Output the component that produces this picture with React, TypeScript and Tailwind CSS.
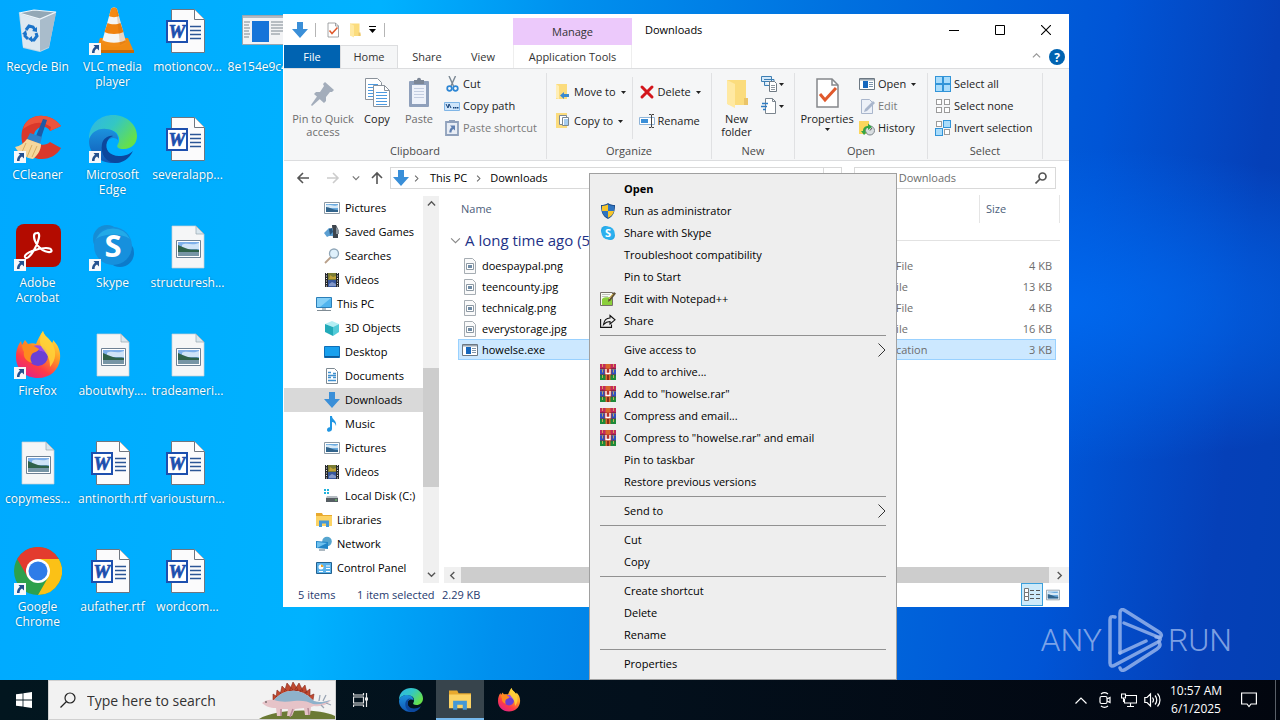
import React from "react";

type IconProps = { size?: number };

/* ---------- shared small shapes ---------- */

function Caret() {
  return (
    <svg width="5" height="3" viewBox="0 0 5 3" className="shrink-0">
      <path d="M0 0h5L2.500 3z" fill="#222" />
    </svg>
  );
}

function Chevron({ dir, size = 8, color = "#555", width = 1.5 }: { dir: "up" | "down" | "left" | "right"; size?: number; color?: string; width?: number }) {
  const paths = { up: "M1 6l4-4 4 4", down: "M1 3l4 4 4-4", left: "M7 1L3 5l4 4", right: "M3 1l4 4-4 4" };
  return (
    <svg width={size} height={size} viewBox="0 0 10 10" fill="none" className="shrink-0">
      <path d={paths[dir]} stroke={color} strokeWidth={width} />
    </svg>
  );
}

function DownArrow({ size = 16 }: IconProps) {
  return (
    <svg width={size} height={size} viewBox="0 0 16 16" className="shrink-0">
      <path d="M5 0h6v7h5l-8 9-8-9h5z" fill="#3a8fd8" />
    </svg>
  );
}

function ShortcutBadge() {
  return (
    <svg width="12" height="12" viewBox="0 0 12 12" className="absolute bottom-0 left-0">
      <path d="M0 0h12v12H0z" fill="#f6f8fb" />
      <path d="M4.500 2H10v5.500L8 5.600C6.300 6.500 5.500 8 5.600 10H3C2.800 7.500 4 5.200 6 3.800z" fill="#24518f" />
    </svg>
  );
}

/* ---------- desktop icons ---------- */

function RecycleBin() {
  return (
    <svg width="48" height="48" viewBox="0 0 48 48">
      <path d="M5 7l37-2-7 36-9 4-17-4z" fill="#c9d9e4" opacity=".95" />
      <path d="M26 12l16-6-7 34-9 4z" fill="#a9bccb" />
      <path d="M5 6l15-3 22 2-16 7z" fill="#93a8b6" stroke="#eef5fa" strokeWidth="1.200" />
      <path d="M6 7l3 33 17 4V13z" fill="#dfeaf2" opacity=".9" />
      <g fill="none" stroke="#1b73c9" strokeWidth="3">
        <path d="M12 23l3-4 4 1 2 3" />
        <path d="M22 26l1 3-3 4h-3" />
        <path d="M14 32l-3-3 0-3" />
      </g>
      <path d="M18 24l5 1 0-5zM18 29v6l-4-3zM8 27l5 1-1-5z" fill="#1b73c9" />
    </svg>
  );
}

function Vlc() {
  return (
    <svg width="48" height="48" viewBox="0 0 48 48">
      <path d="M11 31h28l6 14H7z" fill="#f08a12" />
      <path d="M7 43h38v3H7z" fill="#c96a06" />
      <path d="M22 2c1-2 5-2 6 0l9 33c-4 5-20 5-24 0z" fill="#f4f4f4" />
      <path d="M22 2c1-2 5-2 6 0l2 7c-2 1.500-8 1.500-10 0z" fill="#f58a14" />
      <path d="M18.500 16c3 1.800 10 1.800 13 0l3 9c-4 2.500-15 2.500-19 0z" fill="#f0820f" />
      <path d="M13.500 33c5 3.500 18 3.500 23 0l1 3c-4 5-21 5-25 0z" fill="#f28c18" />
      <path d="M27 0l10 35-6 3z" fill="#b85a00" opacity=".2" />
    </svg>
  );
}

function WordDoc() {
  return (
    <svg width="48" height="48" viewBox="0 0 48 48">
      <path d="M7.500 2.500h23l10 10v33h-33z" fill="#fbfbfc" stroke="#6f7680" />
      <path d="M30.500 2.500v10h10" fill="#fff" stroke="#6f7680" />
      <path d="M26 19.500h11M26 23.500h11M26 27.500h11M26 31.500h11" stroke="#2c5696" strokeWidth="1.500" />
      <path d="M3 14h20v21H3z" fill="#fff" stroke="#1d4fae" strokeWidth="2" />
      <text x="13" y="31" textAnchor="middle" fontFamily="Liberation Serif, serif" fontStyle="italic" fontWeight="bold" fontSize="19" fill="#1d4fae" stroke="#1d4fae" strokeWidth=".7">W</text>
    </svg>
  );
}

function ImageFile() {
  return (
    <svg width="48" height="48" viewBox="0 0 48 48">
      <path d="M8 3h24l8 8v34H8z" fill="#f5f6f7" stroke="#c8ced4" strokeWidth=".7" />
      <path d="M32 3v8h8z" fill="#d9e6ee" stroke="#9aa7b0" strokeWidth=".7" />
      <path d="M12.500 17.500h24v17h-24z" fill="#fff" stroke="#6e8194" />
      <path d="M14 19h21v14H14z" fill="#7fb0ea" />
      <path d="M18 22c4-3 10 1 17-2v6H18z" fill="#cfe3f7" />
      <path d="M14 22c3 1 6 3 10 4s8 0 11 1v3H14z" fill="#2f6149" />
      <path d="M14 29h21v4H14z" fill="#7795a5" />
    </svg>
  );
}

function AppShot() {
  return (
    <svg width="48" height="48" viewBox="0 0 48 48">
      <path d="M3.500 8.500h44v29h-44z" fill="#f2f3f5" stroke="#99a5b0" />
      <path d="M4 9h44v2H4z" fill="#b2bac4" />
      <path d="M13 14h17v21H13z" fill="#1674d9" />
      <path d="M5 15h6M5 18h5M5 21h6M5 24h5M5 27h6M5 30h5M32 15h12M32 18h12M32 21h12M32 24h12M32 27h9" stroke="#7d8790" />
    </svg>
  );
}

function CCleaner() {
  return (
    <svg width="48" height="48" viewBox="0 0 48 48">
      <path d="M47 11C36-4 12-3 8 16c-3 16 8 29 20 28 8 0 15-4 19-11l-11-6c-5 5-14 3-16-4-1-7 5-12 11-11 3 1 4 2 5 4z" fill="#d9382b" />
      <path d="M47 11C36-4 13-2 9 14c9-7 19-9 28-2l-1 4z" fill="#ec543c" />
      <path d="M29 4l4 1-6 18-5-2z" fill="#1d5aa6" />
      <path d="M16 18l12 4-2 7-13-5z" fill="#2f82ca" />
      <path d="M13 24l14 5c0 6-3 11-8 15C12 43 5 39 1 32c5-1 9-4 12-8z" fill="#f5d79c" />
      <path d="M12 28l-4 9M18 30l-5 12M23 31l-5 11" stroke="#d9ac61" strokeWidth="1" />
    </svg>
  );
}

function Edge({ size = 48 }: IconProps) {
  return (
    <svg width={size} height={size} viewBox="0 0 48 48">
      <defs>
        <linearGradient id="edge-top" x1="0" y1="0" x2="1" y2=".6">
          <stop offset="0" stopColor="#2fb5e8" />
          <stop offset=".5" stopColor="#33c7c4" />
          <stop offset="1" stopColor="#66e04a" />
        </linearGradient>
        <linearGradient id="edge-body" x1="0" y1="0" x2="0" y2="1">
          <stop offset="0" stopColor="#1c92dd" />
          <stop offset="1" stopColor="#1057b5" />
        </linearGradient>
      </defs>
      <path d="M0 24C0 8 12 0 24 0c14 0 24 10 24 21 0 8-6 13-13 13-6 0-8-2-6-5 3-5 0-14-9-14C10 13 3 17 0 24z" fill="url(#edge-top)" />
      <path d="M0 26c1-8 9-13 17-12 8 0 13 6 12 11-2-3-9-3-11 2-3 8 3 17 14 20-2 1-5 1-8 1C10 48 0 38 0 26z" fill="url(#edge-body)" />
      <path d="M18 27c-3 7 3 14 12 14 6 0 11-2 14-5-4 8-10 12-18 12-9-1-15-9-13-19 1-5 6-9 11-8-3 1-5 3-6 6z" fill="#0c479d" />
    </svg>
  );
}

function Acrobat() {
  return (
    <svg width="48" height="48" viewBox="0 0 48 48">
      <rect x="2" y="1" width="45" height="43" rx="8" fill="#b30b00" />
      <path d="M23 10c4-1 2 9-3 17-4 7-8 10-9 7-1-4 13-9 21-9 7 0 7 5 2 4-8-1-14-10-14-16 0-2 1-3 3-3z" fill="none" stroke="#fff" strokeWidth="2.200" />
    </svg>
  );
}

function SkypeLarge() {
  return (
    <svg width="48" height="48" viewBox="0 0 48 48">
      <circle cx="18" cy="16" r="14" fill="#168dd4" />
      <circle cx="31" cy="30" r="14" fill="#0c7bcb" />
      <circle cx="24" cy="23" r="19" fill="#1690dd" />
      <path d="M7 16a19 19 0 0 1 34 0c-8-6-26-6-34 0z" fill="#28b5ed" opacity=".7" />
      <text x="24" y="34" textAnchor="middle" fontFamily="Open Sans, sans-serif" fontWeight="bold" fontSize="31" fill="#fff">S</text>
    </svg>
  );
}

function Firefox({ size = 48 }: IconProps) {
  return (
    <svg width={size} height={size} viewBox="0 0 48 48">
      <defs>
        <linearGradient id="ff-body" x1=".85" y1="0" x2=".25" y2="1">
          <stop offset="0" stopColor="#fff04a" />
          <stop offset=".4" stopColor="#ff9a24" />
          <stop offset=".72" stopColor="#ff3b47" />
          <stop offset="1" stopColor="#e0218a" />
        </linearGradient>
      </defs>
      <path d="M29 0c1 5 6 7 9 12 1-1 1-2 1-3 5 5 8 11 7 19-1 11-10 19-22 19C11 47 2 38 2 26c0-7 2-12 5-16l1 4 3-5 3 4c3-1 6-1 8 0 2-5 4-9 7-13z" fill="url(#ff-body)" />
      <circle cx="24" cy="25" r="10" fill="#6b3fd4" />
      <path d="M19 15c8-3 16 3 15 11-1-4-4-6-8-6z" fill="#9b4be6" />
      <path d="M8 14c4-2 9-1 12 1l5 3c-1 3-5 3-7 5-2 3-2 6 0 9-6-2-9-6-8-11-1-2-2-4-2-7z" fill="#ff8a1e" />
      <path d="M29 0c1 5 6 7 9 12 5 8 4 17-2 24 0-9-3-13-7-18-4-4-4-12 0-18z" fill="#ffd43a" opacity=".85" />
    </svg>
  );
}

function Chrome() {
  return (
    <svg width="48" height="48" viewBox="0 0 48 48">
      <circle cx="24" cy="24" r="24" fill="#2da04c" />
      <path d="M13.600 30L3.200 12A24 24 0 0 1 44.800 12H24z" fill="#e33b2e" />
      <path d="M24 12h20.800A24 24 0 0 1 24 48l10.400-18z" fill="#fbc116" />
      <circle cx="24" cy="24" r="12" fill="#fff" />
      <circle cx="24" cy="24" r="9.500" fill="#2f7ce8" />
    </svg>
  );
}

type DesktopEntry = { label: string; icon: React.ReactNode; shortcut?: boolean };

const desktopEntries: DesktopEntry[] = [
  { label: "Recycle Bin", icon: <RecycleBin /> },
  { label: "CCleaner", icon: <CCleaner />, shortcut: true },
  { label: "Adobe Acrobat", icon: <Acrobat />, shortcut: true },
  { label: "Firefox", icon: <Firefox />, shortcut: true },
  { label: "copymess...", icon: <ImageFile /> },
  { label: "Google Chrome", icon: <Chrome />, shortcut: true },
  { label: "VLC media player", icon: <Vlc />, shortcut: true },
  { label: "Microsoft Edge", icon: <Edge />, shortcut: true },
  { label: "Skype", icon: <SkypeLarge />, shortcut: true },
  { label: "aboutwhy....", icon: <ImageFile /> },
  { label: "antinorth.rtf", icon: <WordDoc /> },
  { label: "aufather.rtf", icon: <WordDoc /> },
  { label: "motioncov...", icon: <WordDoc /> },
  { label: "severalapp...", icon: <WordDoc /> },
  { label: "structuresh...", icon: <ImageFile /> },
  { label: "tradeameri...", icon: <ImageFile /> },
  { label: "variousturn...", icon: <WordDoc /> },
  { label: "wordcom...", icon: <WordDoc /> },
  { label: "8e154e9c4...", icon: <AppShot /> },
];

function DesktopIcon({ label, icon, shortcut }: DesktopEntry) {
  return (
    <button className="flex flex-col items-center gap-1 text-white">
      <span className="relative block">
        {icon}
        {shortcut && <ShortcutBadge />}
      </span>
      <span className="px-0.5 text-center text-[12px] leading-[15px] [text-shadow:0_0_2px_#00000066]">{label}</span>
    </button>
  );
}

/* ---------- 16px icons ---------- */

function PropertiesIcon({ size = 16 }: IconProps) {
  return (
    <svg width={size} height={size} viewBox="0 0 32 32" className="shrink-0">
      <path d="M6 2h15l6 6v22H6z" fill="#fff" stroke="#85888c" strokeWidth="1.500" />
      <path d="M21 2v6h6" fill="none" stroke="#85888c" strokeWidth="1.500" />
      <path d="M9 17l5 6 11-12" fill="none" stroke="#e0592c" strokeWidth="3" />
    </svg>
  );
}

function FolderIcon({ size = 16 }: IconProps) {
  return (
    <svg width={size} height={size} viewBox="0 0 32 32" className="shrink-0">
      <path d="M6 3h19v20l2 1v4H8l-2-2z" fill="#fbdc7d" />
      <path d="M6 3l8 4v24l-8-4z" fill="#ffe9a2" />
      <path d="M23 21h4v7h-4z" fill="#eac469" />
    </svg>
  );
}

function PinIcon() {
  return (
    <svg width="32" height="32" viewBox="0 0 32 32">
      <path d="M18 5l9 8-2 2-2 0-4 5 0 4-2 2-10-9 2-2 4 0 4-6-1-2z" fill="#a3adbb" />
      <path d="M11 18l3 3-9 8-1-1z" fill="#a3adbb" />
    </svg>
  );
}

function CopyIcon() {
  return (
    <svg width="32" height="32" viewBox="0 0 32 32">
      <path d="M4.500 1.500h12l4 4v17h-16z" fill="#fff" stroke="#8a929b" />
      <path d="M7 7.500h10M7 10.500h10M7 13.500h10M7 16.500h10M7 19.500h10" stroke="#4c9ae0" />
      <path d="M12.500 8.500h11l5 5v16h-16z" fill="#fff" stroke="#8a929b" />
      <path d="M23.500 8.500v5h5" fill="none" stroke="#8a929b" />
      <path d="M15 15.500h11M15 18.500h11M15 21.500h11M15 24.500h11M15 27.500h11" stroke="#4c9ae0" />
    </svg>
  );
}

function PasteIcon() {
  return (
    <svg width="32" height="32" viewBox="0 0 32 32">
      <rect x="6" y="4" width="20" height="26" rx="1" fill="#8fa0bb" />
      <path d="M9 8h14v19H9z" fill="#eef2fa" />
      <path d="M11 11.500h10M11 14.500h10M11 17.500h10M11 20.500h10" stroke="#c3cde0" />
      <path d="M11 3h3c0-3 4-3 4 0h3v4H11z" fill="#7c8797" />
    </svg>
  );
}

function CutIcon() {
  return (
    <svg width="16" height="16" viewBox="0 0 16 16" fill="none" className="shrink-0">
      <path d="M5 0l4.500 10M11.500 0L7 10" stroke="#7a8793" strokeWidth="1.400" />
      <circle cx="5.500" cy="12.500" r="2.300" stroke="#2d86d4" strokeWidth="1.700" />
      <circle cx="11.500" cy="12.500" r="2.300" stroke="#2d86d4" strokeWidth="1.700" />
    </svg>
  );
}

function CopyPathIcon() {
  return (
    <svg width="16" height="16" viewBox="0 0 16 16" className="shrink-0">
      <path d="M.5 4.500h15v8H.5z" fill="#cfe5fa" stroke="#7fb5e6" />
      <path d="M2 6l2 4 1-4 2 4" fill="none" stroke="#123f77" />
      <path d="M9 9h1.500v1.500H9zM11 9h1.500v1.500H11zM13 9h1.500v1.500H13z" fill="#123f77" />
    </svg>
  );
}

function PasteShortcutIcon() {
  return (
    <svg width="16" height="16" viewBox="0 0 16 16" className="shrink-0">
      <path d="M2 2h12v13H2z" fill="#e8edf5" stroke="#8fa0bb" strokeWidth="1.800" />
      <path d="M5 0h6v3H5z" fill="#8fa0bb" />
      <path d="M6 5.500h5v5L9.300 9C8 9.800 7.500 11 7.500 12.500H5.300C5.300 10.500 6 8.600 7.700 7.300z" fill="#5f7fb0" />
    </svg>
  );
}

function MoveToIcon() {
  return (
    <svg width="16" height="16" viewBox="0 0 16 16" className="shrink-0">
      <path d="M1 0h11v15H1z" fill="#fbdc7d" />
      <path d="M1 0l3 2v13l-3-1z" fill="#ffeeb5" />
      <path d="M14 10v3H9v2l-4-3.500L9 8v2z" fill="#3b8ad0" />
    </svg>
  );
}

function CopyToIcon() {
  return (
    <svg width="16" height="16" viewBox="0 0 16 16" className="shrink-0">
      <path d="M1 0h11v15H1z" fill="#fbdc7d" />
      <path d="M4.500 2.500h7v9h-7z" fill="#fff" stroke="#7b8894" />
      <path d="M7.500 4.500h6v8h-6z" fill="#fff" stroke="#7b8894" />
      <path d="M9 7h4M9 9h4M9 11h4" stroke="#4c9ae0" />
    </svg>
  );
}

function DeleteIcon() {
  return (
    <svg width="16" height="16" viewBox="0 0 16 16" className="shrink-0">
      <path d="M3 3l10 10M13 3L3 13" stroke="#d3161c" strokeWidth="3" strokeLinecap="round" />
    </svg>
  );
}

function RenameIcon() {
  return (
    <svg width="16" height="16" viewBox="0 0 16 16" fill="none" className="shrink-0">
      <path d="M.5 4.500h15v7H.5z" fill="#fff" stroke="#8fb4d8" />
      <path d="M2 6h7v4H2z" fill="#3a8fd8" />
      <path d="M10 1.500h2l.5.500.5-.500h2M12.500 2v12M10 14.500h2l.5-.500.5.500h2" stroke="#444" />
    </svg>
  );
}

function NewItemIcon() {
  return (
    <svg width="16" height="16" viewBox="0 0 16 16" className="shrink-0">
      <path d="M.5.500h10v5H.5zM3.500 5.500v4h5M3 3.500h10v4" fill="#d5e9fa" stroke="#3e7fb3" />
      <path d="M8.500 5.500h5l2 2v8h-7z" fill="#fff" stroke="#6f7a84" />
      <path d="M10 9.500h4M10 11.500h4M10 13.500h4" stroke="#8d979f" />
    </svg>
  );
}

function EasyAccessIcon() {
  return (
    <svg width="16" height="16" viewBox="0 0 16 16" className="shrink-0">
      <path d="M4.500.500h7l3 3v12h-10z" fill="#fff" stroke="#7b858e" />
      <path d="M11.500.500v3h3" fill="none" stroke="#7b858e" />
      <path d="M1 5.500h6M0 8.500h6M2 11.500h3" stroke="#2f7cc4" strokeWidth="1.500" />
    </svg>
  );
}

function ExeIcon() {
  return (
    <svg width="16" height="16" viewBox="0 0 16 16" className="shrink-0">
      <path d="M.5 2.500h15v11H.5z" fill="#fff" stroke="#6c7883" />
      <path d="M1 3h14v1.500H1z" fill="#9ba6b0" />
      <path d="M4 5h5v7H4z" fill="#1667bd" />
      <path d="M10 6.500h4M10 8.500h4M10 10.500h4" stroke="#7e95ac" />
    </svg>
  );
}

function EditIcon() {
  return (
    <svg width="16" height="16" viewBox="0 0 16 16" className="shrink-0">
      <path d="M2.500 1.500h8l3 3v11h-11z" fill="#edf1f8" stroke="#a9b6cc" />
      <path d="M5 14l1-3 8-8 2 2-8 8z" fill="#a9b6cc" />
    </svg>
  );
}

function HistoryIcon() {
  return (
    <svg width="16" height="16" viewBox="0 0 16 16" className="shrink-0">
      <path d="M0 1h10v13H0z" fill="#fbd65c" />
      <circle cx="11" cy="10.500" r="4.500" fill="#d8dde0" stroke="#7d868c" />
      <path d="M11 10.500l2-2.500" stroke="#555" />
      <path d="M4 11c0-4 3-5 5-5V3.500l4 3.500-4 3V8c-2 0-3 1-2.500 4.500L8 12l-3 3-3-4z" fill="#36a544" />
    </svg>
  );
}

function SelectIcon({ filled }: { filled: boolean[] }) {
  const spots = [[1, 1], [9, 1], [1, 9], [9, 9]];
  return (
    <svg width="16" height="16" viewBox="0 0 16 16" className="shrink-0">
      {spots.map(([x, y], i) =>
        filled[i] ? (
          <rect key={i} x={x - 0.5} y={y - 0.5} width="7" height="7" fill="#a9dcfb" stroke="#3194d8" />
        ) : (
          <rect key={i} x={x + 0.5} y={y + 0.5} width="5" height="5" fill="#fff" stroke="#9b9b9b" />
        ),
      )}
    </svg>
  );
}

function PictureIcon({ size = 16 }: IconProps) {
  return (
    <svg width={size} height={size} viewBox="0 0 16 16" className="shrink-0">
      <path d="M.5 2.500h15v11H.5z" fill="#fff" stroke="#8c9aa6" />
      <path d="M2 4h12v8H2z" fill="#6cabdf" />
      <path d="M2 5c5-1 8 2 12 0v3H2z" fill="#d6e9f7" />
      <path d="M2 7c4 0 6 3 12 3v2H2z" fill="#31648c" />
    </svg>
  );
}

function GamesIcon() {
  return (
    <svg width="16" height="16" viewBox="0 0 16 16" className="shrink-0">
      <path d="M8 1h4l2 4v9H9z" fill="#3d454d" />
      <path d="M0 9l5-5 4 1v7H5l-2 1z" fill="#5b9fd2" />
      <path d="M5 5l3-1 1 4-3 3z" fill="#2b567c" />
      <path d="M12 3l3 3v4h-3z" fill="#8a939b" />
    </svg>
  );
}

function SearchesIcon() {
  return (
    <svg width="16" height="16" viewBox="0 0 16 16" className="shrink-0">
      <path d="M7 9l-6 6" stroke="#b9a08a" strokeWidth="1.800" />
      <circle cx="10" cy="5.500" r="4.500" fill="#dff0fb" stroke="#8fa6b8" strokeWidth="1.300" />
    </svg>
  );
}

function VideosIcon() {
  return (
    <svg width="16" height="16" viewBox="0 0 16 16" className="shrink-0">
      <path d="M1 1h14v14H1z" fill="#26282c" />
      <path d="M4 1h8v7H4z" fill="#7b7d34" />
      <path d="M4 8h8v7H4z" fill="#37579c" />
      <path d="M6 3l3 2 3-1v3H5z" fill="#c1a236" />
      <path d="M5 12l3-2 4 2v2H5z" fill="#8297c8" />
      <path d="M2.500 1v14M13.500 1v14" stroke="#e9e9e9" strokeDasharray="1 1.500" />
    </svg>
  );
}

function PcIcon() {
  return (
    <svg width="16" height="16" viewBox="0 0 16 16" className="shrink-0">
      <path d="M.5 1.500h15v10H.5z" fill="#51b4ee" stroke="#2b7eb8" />
      <path d="M1 2h14L4 11H1z" fill="#86d0f7" />
      <path d="M1 14.500h14" stroke="#7f8b94" />
      <path d="M6 12h4v2H6z" fill="#b8c2c9" />
    </svg>
  );
}

function ObjectsIcon() {
  return (
    <svg width="16" height="16" viewBox="0 0 16 16" className="shrink-0">
      <path d="M1 4l7-3 7 3-6 3z" fill="#b4eef4" />
      <path d="M1 4l8 3v9l-8-4z" fill="#22aab9" />
      <path d="M9 7l6-3v8l-6 4z" fill="#52cbd8" />
    </svg>
  );
}

function DesktopSmallIcon() {
  return (
    <svg width="16" height="16" viewBox="0 0 16 16" className="shrink-0">
      <path d="M.5 2.500h15v11H.5z" fill="#18a0ee" stroke="#0f6fb8" />
      <path d="M1 12h14v1.500H1z" fill="#0c5a99" />
    </svg>
  );
}

function DocumentsIcon() {
  return (
    <svg width="16" height="16" viewBox="0 0 16 16" className="shrink-0">
      <path d="M2.500.500h8l3 3v12h-11z" fill="#fff" stroke="#7e8a93" />
      <path d="M4 4.500h3M9 5.500h3M4 7.500h8M4 9.500h3M9 9.500h3M4 12.500h8" stroke="#3f8fce" strokeWidth="1.300" />
    </svg>
  );
}

function MusicIcon() {
  return (
    <svg width="16" height="16" viewBox="0 0 16 16" className="shrink-0">
      <path d="M6 0h2c0 4 5 4 4 10-1-3-2-4-4-4v7c0 3-5 4-5 1 0-2 2-3 3-2.500z" fill="#1f96e3" />
    </svg>
  );
}

function DiskIcon() {
  return (
    <svg width="16" height="16" viewBox="0 0 16 16" className="shrink-0">
      <path d="M0 1h2v2H0zM3 1h2v2H3zM0 4h2v2H0zM3 4h2v2H3z" fill="#1fb2dc" />
      <path d="M3 8h10l1 2H2z" fill="#b5bcc2" />
      <path d="M2 10h12v4H2z" fill="#565e64" />
      <path d="M11 12h2" stroke="#6fe06a" />
    </svg>
  );
}

function LibrariesIcon({ size = 16 }: IconProps) {
  return (
    <svg width={size} height={size} viewBox="0 0 16 16" className="shrink-0">
      <path d="M0 1h6l1 2h9v3H0z" fill="#e8a92e" />
      <path d="M0 4h16v10H0z" fill="#fcd364" />
      <path d="M3 15V8.500h10V15h-3v-3.500H6V15z" fill="#4598d6" />
    </svg>
  );
}

function NetworkIcon() {
  return (
    <svg width="16" height="16" viewBox="0 0 16 16" className="shrink-0">
      <circle cx="11" cy="5.500" r="4.800" fill="#56a5cf" />
      <path d="M0 5l12 1v7l-12-1z" fill="#2185c7" />
      <path d="M1 6l10 1-10 5z" fill="#6fc1ee" />
      <path d="M3 14h6" stroke="#5a7283" />
    </svg>
  );
}

function ControlPanelIcon() {
  return (
    <svg width="16" height="16" viewBox="0 0 16 16" className="shrink-0">
      <path d="M.5 2.500h15v11H.5z" fill="#5ab1ea" stroke="#22618f" />
      <circle cx="5" cy="7" r="2.500" fill="#fff" />
      <path d="M5 7V4.500A2.500 2.500 0 0 1 7.500 7z" fill="#f5a623" />
      <path d="M10 6h4M10 8.500h4M3 11.500h4M10 11.500h4" stroke="#fff" />
    </svg>
  );
}

function FileThumb() {
  return (
    <svg width="16" height="16" viewBox="0 0 16 16" className="shrink-0">
      <path d="M2.500.500h8l3 3v12h-11z" fill="#fafafa" stroke="#a6adb3" />
      <path d="M4.500 5.500h7v6h-7z" fill="#fff" stroke="#8d99a3" />
      <path d="M6 7h4v3H6z" fill="#6f8ba5" />
    </svg>
  );
}

function ShieldIcon() {
  return (
    <svg width="16" height="16" viewBox="0 0 16 16">
      <path d="M8 0c2 1.500 4.500 2 7 2 0 6-1 11-7 14C2 13 1 8 1 2c2.500 0 5-.5 7-2z" fill="#1c4d8c" />
      <path d="M8 1.500V8H2C1.900 6 2 4.500 2 3c2.300-.1 4.300-.6 6-1.500zM8 8h6c-.6 3-2.500 5.300-6 6.800z" fill="#f7c52b" />
      <path d="M8 1.500C9.700 2.400 11.700 2.900 14 3c0 1.500.1 3 0 5H8zM8 8v6.800C4.500 13.300 2.600 11 2 8z" fill="#2f74c0" />
    </svg>
  );
}

function SkypeSmall() {
  return (
    <svg width="16" height="16" viewBox="0 0 16 16">
      <circle cx="5.500" cy="5.500" r="4.500" fill="#22a7e8" />
      <circle cx="10.500" cy="10.500" r="4.500" fill="#22a7e8" />
      <circle cx="8" cy="8" r="6.500" fill="#2bb0ee" />
      <text x="8" y="12" textAnchor="middle" fontFamily="Open Sans, sans-serif" fontWeight="bold" fontSize="11" fill="#fff">S</text>
    </svg>
  );
}

function NotepadIcon() {
  return (
    <svg width="16" height="16" viewBox="0 0 16 16">
      <path d="M.5 1.500h12v13H.5z" fill="#f8faf4" stroke="#77706a" />
      <path d="M2 8c3-3 7-1 10-2v8H2z" fill="#8bcf3b" />
      <path d="M2 3.500h8M2 5.500h6" stroke="#c0c4bb" />
      <path d="M8 11l.5-3L14 1l2 1.500-5.500 7z" fill="#5e5035" />
      <path d="M9 8l4-5" stroke="#e8c75a" />
    </svg>
  );
}

function ShareIcon() {
  return (
    <svg width="16" height="16" viewBox="0 0 16 16" fill="none" stroke="#111" strokeWidth="1.100">
      <path d="M.6 6v8.400h10.900V11.500" />
      <path d="M10 2.500l5 4.300-5 4.200V8.500c-3 0-4.600 1-6.500 3C4 8 6 5 10 5z" />
    </svg>
  );
}

function RarIcon() {
  return (
    <svg width="16" height="16" viewBox="0 0 16 16">
      <path d="M0 0h16v5H0z" fill="#c22a5c" />
      <path d="M0 5.500h16v5H0z" fill="#2f4fbf" />
      <path d="M0 11h16v5H0z" fill="#1d8a3a" />
      <path d="M0 5h16M0 10.700h16" stroke="#331a2a" strokeWidth=".8" />
      <path d="M2.500 0v16M13.500 0v16" stroke="#e2bd54" strokeWidth=".8" strokeDasharray="3 2.500" />
      <path d="M5.500 0h5v16h-5z" fill="#d9692b" />
      <path d="M7 11h2v5H7z" fill="#8a2d1a" />
      <path d="M4.500 4.500h7v6h-7z" fill="#b8302a" />
      <path d="M6 5v4.500h4V5" fill="none" stroke="#fff" strokeWidth="1.400" />
    </svg>
  );
}

/* ---------- ribbon ---------- */

function BigButton({ icon, label, caret, muted, width }: { icon: React.ReactNode; label: string; caret?: boolean; muted?: boolean; width: string }) {
  return (
    <button className={`flex flex-col items-center gap-[3px] pt-1 leading-[13px] ${width} ${muted ? "text-[#6d6d6d]" : "text-[#222]"}`}>
      {icon}
      <span>{label}</span>
      {caret && <Caret />}
    </button>
  );
}

function SmallButton({ icon, label, caret, muted }: { icon: React.ReactNode; label: string; caret?: boolean; muted?: boolean }) {
  return (
    <button className={`flex h-[22px] items-center gap-[3px] whitespace-nowrap ${muted ? "text-[#7a7a7a]" : "text-[#222]"}`}>
      {icon}
      <span>{label}</span>
      {caret && <span className="pl-0.5"><Caret /></span>}
    </button>
  );
}

function RibbonGroup({ title, width, children }: { title: string; width: string; children: React.ReactNode }) {
  return (
    <section className={`mt-1 mb-px flex shrink-0 flex-col border-r border-[#e0e1e3] ${width}`}>
      <div className="flex flex-1">{children}</div>
      <h2 className="text-center leading-4 text-[#4a4a4a]">{title}</h2>
    </section>
  );
}

function Ribbon() {
  return (
    <div className="flex h-[93px] border-y border-[#dcdddf] bg-[#f5f6f7]">
      <RibbonGroup title="Clipboard" width="w-[263px]">
        <div className="flex pl-1">
          <BigButton icon={<PinIcon />} label="Pin to Quick access" muted width="w-[70px]" />
          <BigButton icon={<CopyIcon />} label="Copy" width="w-[38px]" />
          <BigButton icon={<PasteIcon />} label="Paste" muted width="w-[46px]" />
        </div>
        <div className="flex flex-col pl-0.5">
          <SmallButton icon={<CutIcon />} label="Cut" />
          <SmallButton icon={<CopyPathIcon />} label="Copy path" />
          <SmallButton icon={<PasteShortcutIcon />} label="Paste shortcut" muted />
        </div>
      </RibbonGroup>
      <RibbonGroup title="Organize" width="w-[165px]">
        <div className="my-1 flex flex-col gap-[7px] border-r border-[#e0e1e3] pt-1 pr-1.5 pl-2">
          <SmallButton icon={<MoveToIcon />} label="Move to" caret />
          <SmallButton icon={<CopyToIcon />} label="Copy to" caret />
        </div>
        <div className="flex flex-col gap-[7px] pt-2 pl-1.5">
          <SmallButton icon={<DeleteIcon />} label="Delete" caret />
          <SmallButton icon={<RenameIcon />} label="Rename" />
        </div>
      </RibbonGroup>
      <RibbonGroup title="New" width="w-[83px]">
        <BigButton icon={<FolderIcon size={32} />} label="New folder" width="w-[49px]" />
        <div className="flex flex-col">
          <button aria-label="New item" className="flex h-[22px] items-center gap-0.5"><NewItemIcon /><Caret /></button>
          <button aria-label="Easy access" className="flex h-[22px] items-center gap-0.5"><EasyAccessIcon /><Caret /></button>
        </div>
      </RibbonGroup>
      <RibbonGroup title="Open" width="w-[133px]">
        <BigButton icon={<PropertiesIcon size={32} />} label="Properties" caret width="w-16" />
        <div className="flex flex-col">
          <SmallButton icon={<ExeIcon />} label="Open" caret />
          <SmallButton icon={<EditIcon />} label="Edit" muted />
          <SmallButton icon={<HistoryIcon />} label="History" />
        </div>
      </RibbonGroup>
      <RibbonGroup title="Select" width="w-[115px]">
        <div className="flex flex-col pl-[7px]">
          <SmallButton icon={<SelectIcon filled={[true, true, true, true]} />} label="Select all" />
          <SmallButton icon={<SelectIcon filled={[false, false, false, false]} />} label="Select none" />
          <SmallButton icon={<SelectIcon filled={[false, true, true, false]} />} label="Invert selection" />
        </div>
      </RibbonGroup>
    </div>
  );
}

/* ---------- explorer window ---------- */

function TitleBar() {
  return (
    <header className="flex h-[31px] items-stretch">
      <div className="flex w-[229px] items-center pl-2">
        <DownArrow />
        <span className="mx-[7px] h-3.5 w-px bg-[#b5b5b5]" />
        <button aria-label="Properties" className="ml-0.5 flex"><PropertiesIcon /></button>
        <button aria-label="New folder" className="ml-1.5 flex"><FolderIcon /></button>
        <button aria-label="Customize toolbar" className="ml-0.5 flex flex-col items-center gap-0.5 px-1">
          <span className="h-px w-[7px] bg-black" />
          <svg width="7" height="4" viewBox="0 0 7 4"><path d="M0 0h7L3.500 4z" /></svg>
        </button>
        <span className="ml-1 h-3.5 w-px bg-[#b5b5b5]" />
      </div>
      <div className="mt-1 flex w-[119px] items-center justify-center bg-[#ecc9fb] pt-0.5 text-[#333]">Manage</div>
      <h1 className="flex flex-1 items-center pt-px pl-[13px] text-black">Downloads</h1>
      <button aria-label="Minimize" className="flex w-[46px] items-center justify-center">
        <svg width="10" height="10" viewBox="0 0 10 10"><path d="M0 5.500h10" stroke="#000" /></svg>
      </button>
      <button aria-label="Maximize" className="flex w-[46px] items-center justify-center">
        <svg width="10" height="10" viewBox="0 0 10 10"><path d="M.5.500h9v9h-9z" fill="none" stroke="#000" /></svg>
      </button>
      <button aria-label="Close" className="flex w-[46px] items-center justify-center">
        <svg width="10" height="10" viewBox="0 0 10 10"><path d="M0 0l10 10M10 0L0 10" stroke="#000" strokeWidth="1.100" /></svg>
      </button>
    </header>
  );
}

function RibbonTabs() {
  return (
    <nav className="flex h-[23px] items-stretch text-[#333]">
      <div className="flex w-[229px]">
        <button className="w-14 bg-[#0063b1] pt-px text-white">File</button>
        <button className="-mb-px w-[58px] border-x border-t border-[#dcdddf] bg-[#f5f6f7]">Home</button>
        <button className="w-[58px] pt-px">Share</button>
        <button className="w-[54px] pt-px">View</button>
      </div>
      <button className="w-[119px] border-x border-[#eee] pt-px whitespace-nowrap">Application Tools</button>
      <div className="flex flex-1 items-center justify-end gap-2 pr-1">
        <button aria-label="Collapse ribbon" className="flex"><Chevron dir="up" size={9} color="#999" width={1.4} /></button>
        <button aria-label="Help" className="flex">
          <svg width="16" height="16" viewBox="0 0 16 16">
            <circle cx="8" cy="8" r="8" fill="#0063b1" />
            <text x="8" y="12.500" textAnchor="middle" fontFamily="Open Sans, sans-serif" fontWeight="bold" fontSize="12" fill="#fff">?</text>
          </svg>
        </button>
      </div>
    </nav>
  );
}

function ArrowIcon({ dir, color }: { dir: "left" | "right" | "up"; color: string }) {
  const d = { left: "M13 7H2M7 2L2 7l5 5", right: "M1 7h11M7 2l5 5-5 5", up: "M7 13V2M2 7l5-5 5 5" };
  return (
    <svg width="14" height="14" viewBox="0 0 14 14" fill="none">
      <path d={d[dir]} stroke={color} strokeWidth="1.600" />
    </svg>
  );
}

function AddressRow() {
  return (
    <div className="flex h-[34px] items-center pr-[13px]">
      <div className="flex w-[106px] shrink-0 items-center pl-3">
        <button aria-label="Back" className="flex w-[30px]"><ArrowIcon dir="left" color="#555" /></button>
        <button aria-label="Forward" className="flex w-[26px]"><ArrowIcon dir="right" color="#ccc" /></button>
        <button aria-label="Recent locations" className="flex w-[18px]"><Chevron dir="down" size={8} color="#777" /></button>
        <button aria-label="Up" className="flex"><ArrowIcon dir="up" color="#555" /></button>
      </div>
      <div className="flex h-[22px] flex-1 items-center border border-[#d9d9d9] text-black">
        <span className="pl-0.5"><DownArrow /></span>
        <span className="pr-2.5 pl-1"><Chevron dir="right" size={7} color="#666" /></span>
        <a href="#this-pc">This PC</a>
        <span className="px-2"><Chevron dir="right" size={7} color="#666" /></span>
        <a href="#downloads">Downloads</a>
        <button aria-label="Previous locations" className="ml-auto flex h-full w-[18px] items-center justify-center border-l border-[#d9d9d9]">
          <Chevron dir="down" size={7} />
        </button>
      </div>
      <label className="ml-3 flex h-[22px] w-[202px] shrink-0 items-center border border-[#d9d9d9] pr-2 pl-1.5">
        <input type="search" aria-label="Search Downloads" placeholder="Search Downloads" className="w-full min-w-0 outline-none placeholder:text-[#6d6d6d]" />
        <svg width="12" height="12" viewBox="0 0 12 12" fill="none" stroke="#555" strokeWidth="1.700" className="shrink-0">
          <circle cx="7.500" cy="4.500" r="3.500" />
          <path d="M5 7l-4.500 4.500" />
        </svg>
      </label>
    </div>
  );
}

type NavItem = { label: string; icon: React.ReactNode; top?: boolean; active?: boolean };

const navItems: NavItem[] = [
  { label: "Pictures", icon: <PictureIcon /> },
  { label: "Saved Games", icon: <GamesIcon /> },
  { label: "Searches", icon: <SearchesIcon /> },
  { label: "Videos", icon: <VideosIcon /> },
  { label: "This PC", icon: <PcIcon />, top: true },
  { label: "3D Objects", icon: <ObjectsIcon /> },
  { label: "Desktop", icon: <DesktopSmallIcon /> },
  { label: "Documents", icon: <DocumentsIcon /> },
  { label: "Downloads", icon: <DownArrow />, active: true },
  { label: "Music", icon: <MusicIcon /> },
  { label: "Pictures", icon: <PictureIcon /> },
  { label: "Videos", icon: <VideosIcon /> },
  { label: "Local Disk (C:)", icon: <DiskIcon /> },
  { label: "Libraries", icon: <LibrariesIcon />, top: true },
  { label: "Network", icon: <NetworkIcon />, top: true },
  { label: "Control Panel", icon: <ControlPanelIcon />, top: true },
];

function NavPane() {
  return (
    <div className="flex w-[155px] shrink-0 pt-px">
      <ul className="flex-1">
        {navItems.map((item, i) => (
          <li key={i}>
            <a
              href="#folder"
              className={`flex h-6 items-center gap-[5px] whitespace-nowrap text-black ${item.top ? "pl-8" : "pl-10"} ${item.active ? "bg-[#d9d9d9]" : ""}`}
            >
              {item.icon}
              {item.label}
            </a>
          </li>
        ))}
      </ul>
      <div className="flex w-4 flex-col items-center bg-[#f0f0f0]">
        <button aria-label="Scroll up" className="flex h-[17px] items-center"><Chevron dir="up" size={9} /></button>
        <div className="flex w-full flex-1 flex-col">
          <div className="flex-[155]" />
          <div className="flex-[119] bg-[#cdcdcd]" />
          <div className="flex-[79]" />
        </div>
        <button aria-label="Scroll down" className="flex h-[17px] items-center"><Chevron dir="down" size={9} /></button>
      </div>
    </div>
  );
}

const files = [
  { name: "doespaypal.png", type: "PNG File", size: "4 KB" },
  { name: "teencounty.jpg", type: "JPG File", size: "13 KB" },
  { name: "technicalg.png", type: "PNG File", size: "4 KB" },
  { name: "everystorage.jpg", type: "JPG File", size: "16 KB" },
  { name: "howelse.exe", type: "Application", size: "3 KB", selected: true },
];

function FilePane() {
  return (
    <div className="flex min-w-0 flex-1 flex-col">
      <div className="flex-1 pr-[9px] pl-[19px]">
        <table className="w-full table-fixed border-separate border-spacing-0 text-left leading-4">
          <colgroup>
            <col />
            <col className="w-[115px]" />
            <col className="w-[77px]" />
            <col className="w-1" />
          </colgroup>
          <thead>
            <tr className="h-7 text-[#4c607a]">
              <th className="p-0 pl-[3px] font-normal">Name</th>
              <th className="border-l border-[#e5e5e5] p-0 pl-1.5 font-normal">Type</th>
              <th className="border-l border-[#e5e5e5] p-0 pl-1.5 font-normal">Size</th>
              <th className="p-0"><span className="ml-[3px] block h-7 w-px bg-[#e5e5e5]" /></th>
            </tr>
          </thead>
          <tbody>
            <tr className="h-8">
              <th colSpan={4} className="p-0 font-normal">
                <span className="-ml-2 flex items-center gap-1 pt-0.5 text-[15px] text-[#1e3287]">
                  <Chevron dir="down" size={11} color="#888" width={1} />
                  A long time ago (5)
                  <span className="ml-1 h-px flex-1 bg-[#e2e2e2]" />
                </span>
              </th>
            </tr>
            {files.map((f) => {
              const cell = f.selected ? "border-y border-[#99d1ff] bg-[#cce8ff]" : "";
              return (
                <tr key={f.name} className="h-[21px] text-[#6d6d6d]">
                  <td className={`py-0 pr-0 text-black ${cell} ${f.selected ? "border-l pl-[3px]" : "pl-1"}`}>
                    <span className="flex items-center gap-1">
                      {f.selected ? <ExeIcon /> : <FileThumb />}
                      {f.name}
                    </span>
                  </td>
                  <td className={`py-0 pr-0 pl-1.5 ${cell}`}>{f.type}</td>
                  <td className={`py-0 pl-0 text-right ${cell} ${f.selected ? "border-r pr-[3px]" : "pr-1"}`}>{f.size}</td>
                  <td className="p-0" />
                </tr>
              );
            })}
          </tbody>
        </table>
      </div>
      <div className="ml-[5px] flex h-4 items-center bg-[#f0f0f0]">
        <button aria-label="Scroll left" className="flex w-[17px] justify-center"><Chevron dir="left" size={9} /></button>
        <div className="h-full flex-1 bg-[#cdcdcd]" />
        <button aria-label="Scroll right" className="flex w-5 justify-center"><Chevron dir="right" size={9} /></button>
      </div>
    </div>
  );
}

function StatusBar() {
  return (
    <footer className="flex h-6 items-center pl-3.5 text-[#26396e]">
      <span className="w-[59px]">5 items</span>
      <span className="w-[85px] whitespace-nowrap">1 item selected</span>
      <span>2.29 KB</span>
      <button aria-label="Details view" className="mb-px ml-auto flex h-[23px] w-[22px] items-center justify-center border border-[#3aa0dc] bg-[#cdeafa]">
        <svg width="16" height="14" viewBox="0 0 16 14" fill="none">
          <path d="M.5.500h4v4h-4zM.5 4.500h4v4h-4zM.5 8.500h4v4h-4z" stroke="#777" fill="#fff" />
          <path d="M6 2.500h4M6 6.500h4M6 10.500h4M12 2.500h4M12 6.500h4M12 10.500h4" stroke="#555" />
        </svg>
      </button>
      <button aria-label="Large icons view" className="mr-[9px] ml-[3px] flex"><PictureIcon size={14} /></button>
    </footer>
  );
}

function ExplorerWindow() {
  return (
    <main className="absolute top-3.5 left-[283px] flex h-[593px] w-[786px] flex-col bg-white pl-px">
      <TitleBar />
      <RibbonTabs />
      <Ribbon />
      <AddressRow />
      <div className="flex min-h-0 flex-1">
        <NavPane />
        <FilePane />
      </div>
      <StatusBar />
    </main>
  );
}

/* ---------- context menu ---------- */

type MenuEntry = { label: string; icon?: React.ReactNode; bold?: boolean; sub?: boolean };

const menuGroups: MenuEntry[][] = [
  [
    { label: "Open", bold: true },
    { label: "Run as administrator", icon: <ShieldIcon /> },
    { label: "Share with Skype", icon: <SkypeSmall /> },
    { label: "Troubleshoot compatibility" },
    { label: "Pin to Start" },
    { label: "Edit with Notepad++", icon: <NotepadIcon /> },
    { label: "Share", icon: <ShareIcon /> },
  ],
  [
    { label: "Give access to", sub: true },
    { label: "Add to archive...", icon: <RarIcon /> },
    { label: 'Add to "howelse.rar"', icon: <RarIcon /> },
    { label: "Compress and email...", icon: <RarIcon /> },
    { label: 'Compress to "howelse.rar" and email', icon: <RarIcon /> },
    { label: "Pin to taskbar" },
    { label: "Restore previous versions" },
  ],
  [{ label: "Send to", sub: true }],
  [{ label: "Cut" }, { label: "Copy" }],
  [{ label: "Create shortcut" }, { label: "Delete" }, { label: "Rename" }],
  [{ label: "Properties" }],
];

function ContextMenu() {
  return (
    <div role="menu" className="absolute top-[173px] left-[589px] w-[308px] border border-[#a0a0a0] bg-[#eeeeee] px-2.5 py-1 text-black">
      {menuGroups.map((group, g) => (
        <React.Fragment key={g}>
          {g > 0 && <div role="separator" className="my-[3px] h-px bg-[#919191]" />}
          {group.map((item) => (
            <button key={item.label} role="menuitem" className="flex h-[22px] w-full items-center gap-2 text-left">
              <span className="flex w-4 shrink-0">{item.icon}</span>
              <span className={`flex-1 ${item.bold ? "font-bold" : ""}`}>{item.label}</span>
              {item.sub && (
                <svg width="8" height="14" viewBox="0 0 8 14" fill="none">
                  <path d="M.5.500L7 7 .5 13.500" stroke="#333" />
                </svg>
              )}
            </button>
          ))}
        </React.Fragment>
      ))}
    </div>
  );
}

/* ---------- watermark ---------- */

function Watermark() {
  return (
    <div className="absolute right-12 bottom-2 flex items-center gap-1 font-['Roboto',sans-serif] text-[32px] leading-none font-light text-[#9db9ee]/80">
      <span>ANY</span>
      <svg width="58" height="64" viewBox="0 0 58 64" fill="none" stroke="currentColor" strokeWidth="3.500" strokeLinecap="round" strokeLinejoin="round">
        <path d="M14 45V5c0-3 2-4 4-3l35 22c3 2 3 4 1 5s-3 0-4 0" />
        <path d="M9 9C5 8 4 9 4 12v43c0 3 2 4 5 2l43-23c3-2 3-4 0-5L18 15" />
        <path d="M14 45l26-12M14 60c1 3 3 3 6 1l31-20c3-2 4-4 2-7" />
      </svg>
      <span>RUN</span>
    </div>
  );
}

/* ---------- taskbar ---------- */

function Dinosaur() {
  return (
    <svg width="76" height="38" viewBox="0 0 76 38">
      <path d="M0 38c14-9 56-12 76-3v3z" fill="#6b7a35" />
      <g fill="#c0492f" stroke="#84291c" strokeWidth=".6">
        <path d="M14 19l0-6 6 4zM17 17l1-8 6 5zM21 14l2-9 6 6zM25 12l3-10 6 7zM30 11l4-10 5 8zM35 10l5-8 4 8zM40 11l6-7 2 8zM44 13l7-5 0 7zM48 16l7-3-1 6z" />
      </g>
      <path d="M3 22c3-3 8-4 12-3 6-7 14-10 22-9 8 1 14 6 18 10 5 2 10 1 17-1-4 5-10 7-17 6l-3 1-1 8h-5l-1-7-9 1-3 7h-5l1-7-6 0-1 7h-4l-1-8c-6 0-11-2-14-5z" fill="#e6c3c8" />
      <path d="M15 19c6-7 14-10 22-9 8 1 14 6 18 10 5 2 10 1 17-1-5 3-11 5-18 4-5-3-12-4-19-3-8 1-14 1-20-1z" fill="#8eb2cb" />
      <path d="M60 20l1-6M64 20l3-6M62 24l3 3M67 22l5 2" stroke="#9aa5b4" strokeWidth="1.300" />
      <path d="M22 28v7M34 28l-3 8M49 27l1 7" stroke="#b58b98" strokeWidth="1.500" />
      <circle cx="7" cy="21" r=".8" fill="#333" />
    </svg>
  );
}

function Taskbar() {
  return (
    <footer className="relative flex h-10 items-stretch bg-gradient-to-r from-[#02161f] via-[#03101c] to-[#02060f] text-white">
      <button aria-label="Start" className="flex w-12 items-center justify-center">
        <svg width="16" height="16" viewBox="0 0 16 16" fill="#fff">
          <path d="M0 2.300l6.600-.9v6.200H0zM7.400 1.300L16 0v7.600H7.400zM0 8.400h6.600v6.200L0 13.700zM7.400 8.400H16V16l-8.600-1.300z" />
        </svg>
      </button>
      <label className="flex w-[288px] items-center border border-[#d0d0d0] bg-[#f2f2f2] pl-[11px] text-[#333]">
        <svg width="16" height="16" viewBox="0 0 16 16" fill="none" stroke="#222" strokeWidth="1.200" className="shrink-0">
          <circle cx="10" cy="6" r="5" />
          <path d="M6.500 9.500L.5 15.500" />
        </svg>
        <input type="text" aria-label="Search" placeholder="Type here to search" className="ml-[11px] w-full min-w-0 text-[14px] outline-none placeholder:text-[#333]" />
        <span className="shrink-0"><Dinosaur /></span>
      </label>
      <button aria-label="Task view" className="flex w-[50px] items-center justify-center">
        <svg width="16" height="16" viewBox="0 0 16 16" fill="none" stroke="#e8e8e8" strokeWidth="1.200">
          <path d="M.5 1v2h10V1M.5 15v-2h10v2M.5 5h10v6H.5zM13.500 1v14" />
          <path d="M12 5.500h3v3h-3z" fill="#e8e8e8" stroke="none" />
        </svg>
      </button>
      <button aria-label="Edge" className="flex w-[50px] items-center justify-center"><Edge size={24} /></button>
      <button aria-label="File Explorer" className="flex w-12 items-center justify-center border-b-2 border-[#76b9ed] bg-[#37444c] pt-0.5">
        <LibrariesIcon size={22} />
      </button>
      <button aria-label="Firefox" className="flex w-[50px] items-center justify-center"><Firefox size={24} /></button>
      <div className="ml-auto flex items-center">
        <button aria-label="Hidden icons" className="flex w-6 justify-center">
          <svg width="12" height="7" viewBox="0 0 12 7" fill="none"><path d="M.5 6.500L6 1l5.500 5.500" stroke="#fff" strokeWidth="1.200" /></svg>
        </button>
        <button aria-label="Meet now" className="flex w-6 justify-center">
          <svg width="16" height="16" viewBox="0 0 16 16" fill="none" stroke="#fff" strokeWidth="1.200">
            <rect x="3" y="4.500" width="7" height="7" rx="1.500" />
            <path d="M10 7l3-1.500v5L10 9M4 2c2-1.500 5-1.500 7 0M4 14c2 1.500 5 1.500 7 0" />
          </svg>
        </button>
        <button aria-label="Network" className="flex w-6 justify-center">
          <svg width="16" height="16" viewBox="0 0 16 16" fill="none" stroke="#fff" strokeWidth="1.100">
            <path d="M5 3.500h10.500v7.500H3.500V7M9.500 11v3M6 14.500h7M.5 2h4v4h-4zM2.500 6v4" />
          </svg>
        </button>
        <button aria-label="Volume" className="flex w-6 justify-center">
          <svg width="18" height="16" viewBox="0 0 18 16" fill="none" stroke="#fff" strokeWidth="1.200">
            <path d="M.8 5.500H3l3.500-3.500v12L3 10.500H.8zM8.500 5.500c1.200 1.500 1.200 3.500 0 5M11 3.500c2.300 2.500 2.300 6.500 0 9M13.500 1.500c3.300 3.500 3.300 9.500 0 13" />
          </svg>
        </button>
        <div className="w-[62px] text-center text-[12px] leading-[18px]">
          <div>10:57 AM</div>
          <div>6/1/2025</div>
        </div>
        <button aria-label="Notifications" className="flex w-11 justify-center">
          <svg width="16" height="16" viewBox="0 0 16 16" fill="none"><path d="M.6 1h14.800v11H10l-2 2.500L6 12H.6z" stroke="#fff" strokeWidth="1.200" /></svg>
        </button>
        <button aria-label="Show desktop" className="ml-1 h-10 w-[5px] border-l border-[#5a6068]" />
      </div>
    </footer>
  );
}

export default function App() {
  return (
    <div className="relative flex min-h-screen flex-col overflow-hidden bg-[#00a8fa] font-['Open_Sans',sans-serif] text-[11px]">
      <div className="relative flex-1 bg-[radial-gradient(ellipse_at_82%_45%,#0068ee_0%,#0068ee00_30%),linear-gradient(97deg,#00a9ff_0%,#00b2ff_28%,#0090ee_42%,#0070df_62%,#0055d6_82%,#0540b8_94%,#0340b4_100%)]">
        <div className="grid auto-cols-[75px] grid-flow-col grid-rows-[repeat(6,108px)] pt-[7px]">
          {desktopEntries.map((e) => (
            <DesktopIcon key={e.label} {...e} />
          ))}
        </div>
        <Watermark />
        <ExplorerWindow />
        <ContextMenu />
      </div>
      <Taskbar />
    </div>
  );
}
